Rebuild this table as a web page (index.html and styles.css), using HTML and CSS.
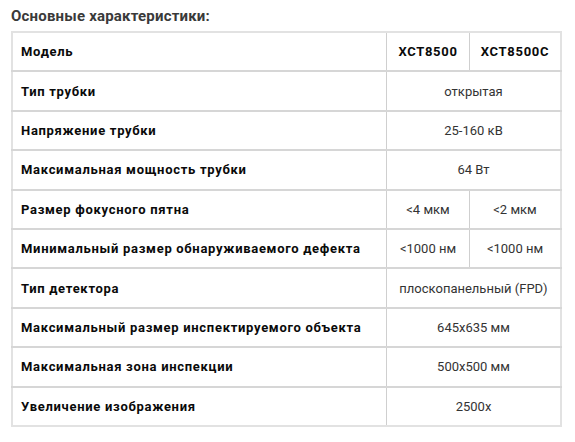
FILE: index.html
```html
<!DOCTYPE html>
<html lang="ru">
<head>
<meta charset="utf-8">
<link rel="stylesheet" href="styles.css">
</head>
<body>
<div class="wrap">
  <h3 class="title">Основные характеристики:</h3>
  <table class="specs">
    <tr><th>Модель</th><th class="c">XCT8500</th><th class="c">XCT8500C</th></tr>
    <tr><th>Тип трубки</th><td colspan="2">открытая</td></tr>
    <tr><th>Напряжение трубки</th><td colspan="2">25-160 кВ</td></tr>
    <tr><th>Максимальная мощность трубки</th><td colspan="2">64 Вт</td></tr>
    <tr><th>Размер фокусного пятна</th><td>&lt;4 мкм</td><td>&lt;2 мкм</td></tr>
    <tr><th>Минимальный размер обнаруживаемого дефекта</th><td>&lt;1000 нм</td><td>&lt;1000 нм</td></tr>
    <tr><th>Тип детектора</th><td colspan="2">плоскопанельный (FPD)</td></tr>
    <tr><th>Максимальный размер инспектируемого объекта</th><td colspan="2">645х635 мм</td></tr>
    <tr><th>Максимальная зона инспекции</th><td colspan="2">500х500 мм</td></tr>
    <tr><th>Увеличение изображения</th><td colspan="2">2500х</td></tr>
  </table>
</div>
</body>
</html>
```
FILE: styles.css
```css
html, body { margin: 0; padding: 0; background: #fff; }
body { font-family: Roboto, "Liberation Sans", sans-serif; color: #222; }
.wrap { padding: 8px 13px 0 11px; }
.title {
  margin: 0 0 6px 0;
  font-size: 15px;
  font-weight: 700;
  color: #3a3a3a;
  line-height: 17px;
  letter-spacing: 0.2px;
}
.specs {
  width: 551px;
  border-collapse: collapse;
  border: 2px solid #e2e2e2;
  table-layout: fixed;
}
.specs tr { height: 39.4px; border-bottom: 2px solid #d6d6d6; }
.specs tr:last-child { border-bottom: none; }
.specs th, .specs td { padding: 0 8px; font-size: 13px; vertical-align: middle; }
.specs th {
  text-align: left;
  font-weight: 700;
  color: #0a0a0a;
  width: 357px;
  letter-spacing: 0.7px;
}
.specs th.c { text-align: center; width: auto; padding: 0; border-left: 1px solid #cfcfcf; }
.specs th.c:last-child { width: 90px; }
.specs td {
  text-align: center;
  font-weight: 400;
  color: #333;
  border-left: 1px solid #cfcfcf;
  padding: 0;
}
```
